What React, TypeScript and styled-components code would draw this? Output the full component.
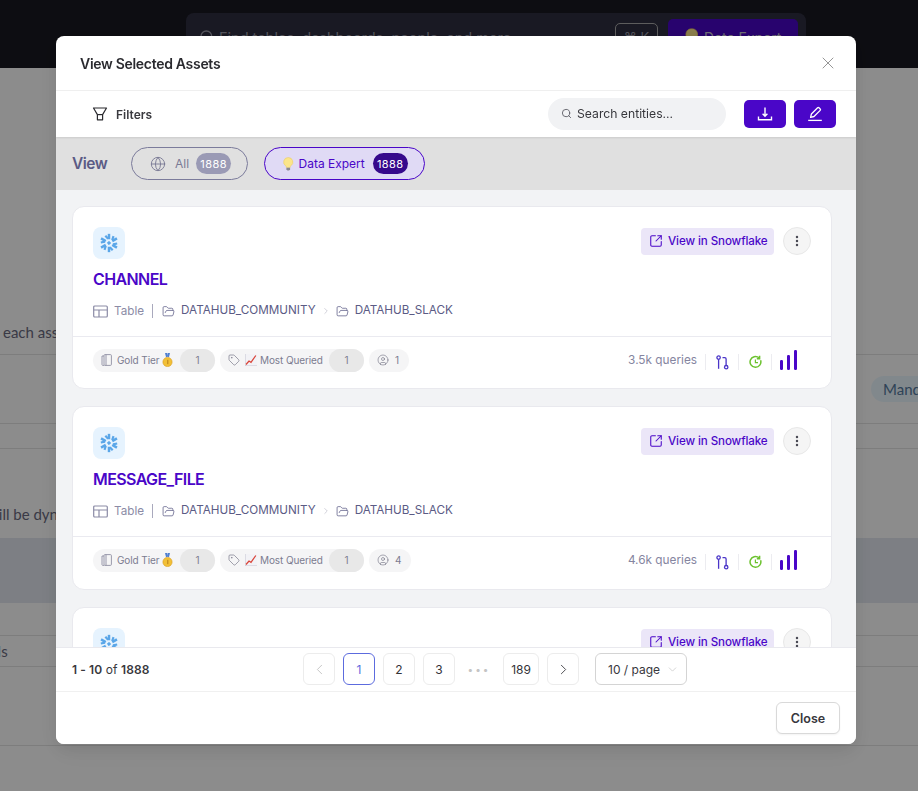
import styled, { createGlobalStyle } from 'styled-components';
import {
    ChevronDown,
    ChevronLeft,
    ChevronRight,
    CircleUser,
    EllipsisVertical,
    FolderOpen,
    Globe,
    Search,
    SquareArrowOutUpRight,
    Tag,
    X,
} from 'lucide-react';

const primary = '#4a06c8';
const slate = '#5b5b85';

const GlobalStyle = createGlobalStyle`
    * { box-sizing: border-box; }
    html, body { margin: 0; padding: 0; height: 100%; overflow: hidden; }
    body { font-family: Inter, "Noto Sans", sans-serif; background: #fff; }
`;

/* page behind the dialog */
const Page = styled.div`
    height: 791px;
    overflow: hidden;
    display: flex;
    flex-direction: column;
    font-family: Lato, "Open Sans", sans-serif;
    color: #6a6a80;
    font-size: 15px;
`;
const TopBar = styled.div`
    height: 68px;
    flex: none;
    background: #181821;
    padding: 13px 0 0 186px;
`;
const GlobalSearch = styled.div`
    width: 620px;
    height: 48px;
    border-radius: 8px;
    background: #2f2f41;
    display: flex;
    align-items: center;
    padding: 0 8px 0 13px;
    gap: 4px;
    color: #9a9aa8;
    font-family: Inter, sans-serif;
    font-size: 14.5px;
`;
const GlobalSearchText = styled.span`
    flex: 1;
`;
const KeyHint = styled.span`
    width: 43px;
    height: 28px;
    border: 1px solid #aaa;
    border-radius: 5px;
    display: flex;
    align-items: center;
    justify-content: center;
    font-size: 13px;
    margin-right: 6px;
`;
const ExpertButton = styled.span`
    width: 130px;
    height: 36px;
    border-radius: 5px;
    background: ${primary};
    color: #c9c9d2;
    display: flex;
    align-items: center;
    justify-content: center;
    gap: 6px;
    font-size: 14px;
`;
const BackRow = styled.div<{ $height: number; $line?: boolean; $band?: boolean }>`
    height: ${props => props.$height}px;
    flex: none;
    display: flex;
    align-items: flex-end;
    white-space: nowrap;
    background: ${props => (props.$band ? '#e3e8f0' : 'transparent')};
    border-bottom: ${props => (props.$line ? '1px solid #e4e4e4' : 'none')};
`;
const BackText = styled.span<{ $indent: number; $bottom: number }>`
    margin-left: ${props => props.$indent}px;
    margin-bottom: ${props => props.$bottom}px;
`;
const StatusPill = styled.span`
    margin: 0 0 21px 871px;
    height: 26px;
    padding: 0 12px;
    border-radius: 13px;
    background: #ecf8ff;
    color: #557aa0;
    display: flex;
    align-items: center;
`;

/* dialog */
const Overlay = styled.div`
    position: fixed;
    inset: 0;
    background: rgba(0, 0, 0, 0.45);
    padding: 36px 0 0 56px;
`;
const Dialog = styled.div`
    width: 800px;
    height: 708px;
    background: #fff;
    border-radius: 8px;
    overflow: hidden;
    display: flex;
    flex-direction: column;
    box-shadow: 0 6px 16px rgba(0, 0, 0, 0.08), 0 9px 28px rgba(0, 0, 0, 0.05);
`;
const DialogHeader = styled.div`
    height: 55px;
    flex: none;
    display: flex;
    align-items: center;
    justify-content: space-between;
    padding: 0 18px 0 24px;
    border-bottom: 1px solid #f0f0f0;
    h4 {
        margin: 0;
        font-size: 14px;
        font-weight: 600;
        color: #2a2a2f;
        letter-spacing: -0.3px;
    }
    svg {
        color: #8c8c8c;
    }
`;
const Toolbar = styled.div`
    height: 46px;
    flex: none;
    display: flex;
    align-items: center;
    padding: 0 20px 0 36px;
    box-shadow: 0 1px 2px rgba(0, 0, 0, 0.1);
    position: relative;
`;
const FiltersLabel = styled.div`
    display: flex;
    align-items: center;
    gap: 8px;
    font-size: 12px;
    font-weight: 600;
    color: #3a3a3f;
    flex: 1;
`;
const EntitySearch = styled.div`
    width: 178px;
    height: 32px;
    border-radius: 16px;
    background: #f1f2f4;
    display: flex;
    align-items: center;
    gap: 5px;
    padding: 0 0 2px 13px;
    font-size: 12.2px;
    color: #37373c;
    margin-right: 18px;
    svg {
        color: #5f5f68;
    }
`;
const IconButton = styled.button`
    width: 42px;
    height: 28px;
    border: none;
    border-radius: 5px;
    background: ${primary};
    color: #fff;
    display: flex;
    align-items: center;
    justify-content: center;
    padding: 0;
    & + & {
        margin-left: 8px;
    }
`;
const ViewBar = styled.div`
    height: 53px;
    flex: none;
    background: #e0e0e0;
    display: flex;
    align-items: center;
    padding: 0 0 0 16px;
`;
const ViewLabel = styled.span`
    font-size: 15.5px;
    font-weight: 600;
    color: ${slate};
    width: 59px;
    letter-spacing: -0.5px;
    margin-bottom: 1px;
`;
const ViewPill = styled.div<{ $active?: boolean }>`
    height: 33px;
    width: ${props => (props.$active ? 161 : 117)}px;
    margin-right: 16px;
    border-radius: 17px;
    border: 1px solid ${props => (props.$active ? primary : '#7b7b9b')};
    background: ${props => (props.$active ? '#e0daf5' : 'transparent')};
    color: ${props => (props.$active ? primary : '#7a7a95')};
    font-size: 12px;
    display: flex;
    align-items: center;
    padding-left: 18px;
    gap: ${props => (props.$active ? 5 : 9)}px;
`;
const ViewCount = styled.span<{ $active?: boolean }>`
    width: 35px;
    height: 21px;
    border-radius: 11px;
    margin-left: ${props => (props.$active ? 3 : -2)}px;
    background: ${props => (props.$active ? '#36098c' : '#9a9ab5')};
    color: #fff;
    font-size: 11px;
    letter-spacing: 0.4px;
    display: flex;
    align-items: center;
    justify-content: center;
`;
const ResultList = styled.div`
    flex: 1;
    min-height: 0;
    overflow: hidden;
    background: #f2f3f5;
    padding: 16px 24px 0 16px;
    display: flex;
    flex-direction: column;
    gap: 17px;
`;
const Card = styled.div`
    flex: none;
    height: 183.3px;
    background: #fff;
    border: 1px solid #e9e9ee;
    border-radius: 12px;
    display: flex;
    flex-direction: column;
`;
const CardBody = styled.div`
    height: 130px;
    flex: none;
    padding: 20px 20px 0 20px;
    border-bottom: 1px solid #eaeaf0;
`;
const CardTop = styled.div`
    display: flex;
    align-items: flex-start;
    height: 32px;
`;
const SourceIcon = styled.div`
    width: 32px;
    height: 32px;
    border-radius: 8px;
    background: #e6f3fe;
    display: flex;
    align-items: center;
    justify-content: center;
    margin-right: auto;
`;
const SnowflakeLink = styled.div`
    height: 27px;
    width: 133px;
    margin-top: 1px;
    border-radius: 4px;
    background: #ebe6f8;
    color: ${primary};
    font-size: 11.6px;
    font-weight: 500;
    display: flex;
    align-items: center;
    gap: 5px;
    padding: 0 0 1px 8px;
    white-space: nowrap;
    letter-spacing: -0.1px;
`;
const MoreButton = styled.div`
    width: 28px;
    height: 28px;
    margin-left: 9px;
    border-radius: 50%;
    background: #f5f5f5;
    border: 1px solid #e8e8e8;
    color: #4a4a55;
    display: flex;
    align-items: center;
    justify-content: center;
`;
const CardTitle = styled.h3`
    margin: 9px 0 0;
    font-size: 16px;
    line-height: 22px;
    font-weight: 600;
    color: ${primary};
    letter-spacing: -0.6px;
`;
const MetaRow = styled.div`
    display: flex;
    align-items: center;
    margin-top: 10px;
    height: 22px;
    color: ${slate};
    font-size: 11.7px;
    white-space: nowrap;
    svg {
        flex: none;
    }
`;
const MetaType = styled.span`
    color: #8b8ba6;
    margin-left: 6px;
`;
const MetaDivider = styled.span`
    width: 1px;
    height: 14px;
    background: #a9a9bd;
    margin: 0 9px 0 8px;
`;
const MetaPath = styled.span`
    margin-left: 6px;
    margin-bottom: 2px;
`;
const MetaChevron = styled.span`
    display: flex;
    margin: 0 5px;
    color: #b5b5c3;
`;
const CardFooter = styled.div`
    flex: 1;
    display: flex;
    align-items: center;
    padding: 0 34px 5px 20px;
`;
const Chip = styled.div<{ $width?: number }>`
    height: 23px;
    width: ${props => (props.$width ? `${props.$width}px` : 'auto')};
    border-radius: 12px;
    background: #f5f5f6;
    color: #7c7c90;
    font-size: 10px;
    display: flex;
    align-items: center;
    padding-left: 8px;
    margin-right: 5px;
    white-space: nowrap;
    letter-spacing: -0.1px;
`;
const ChipLabel = styled.span`
    display: flex;
    align-items: center;
    gap: 3px;
    margin-left: 5px;
`;
const ChipCount = styled.span`
    width: 35px;
    height: 23px;
    border-radius: 12px;
    background: #e8e8e8;
    margin-left: auto;
    display: flex;
    align-items: center;
    justify-content: center;
`;
const OwnerCount = styled.span`
    margin: 0 10px 0 6px;
`;
const FooterStats = styled.div`
    margin-left: auto;
    display: flex;
    align-items: center;
    color: #8585a0;
    font-size: 11.8px;
`;
const StatDivider = styled.span<{ $last?: boolean }>`
    width: 1px;
    height: 16px;
    background: #ececf0;
    margin: 4px ${props => (props.$last ? 8 : 10)}px 0 8px;
`;
const StatIcon = styled.span`
    display: flex;
    width: 13px;
    margin: 4px 1px 0 0;
`;
const PaginationBar = styled.div`
    height: 45px;
    flex: none;
    background: #fff;
    border-top: 1px solid #e9e9ee;
    border-bottom: 1px solid #f0f0f0;
    display: flex;
    align-items: center;
    padding: 0 0 1px 16px;
    position: relative;
`;
const RangeLabel = styled.div`
    width: 231px;
    font-size: 12px;
    letter-spacing: 0.1px;
    color: #38383d;
    b {
        font-weight: 600;
    }
`;
const Pager = styled.div`
    display: flex;
    gap: 8px;
    align-items: center;
`;
const PageItem = styled.div<{ $active?: boolean; $wide?: boolean; $disabled?: boolean }>`
    width: ${props => (props.$wide ? 36 : 32)}px;
    height: 32px;
    border-radius: 6px;
    border: 1px solid ${props => (props.$active ? '#5c6bde' : '#ececec')};
    color: ${props => (props.$active ? '#5c6bde' : props.$disabled ? '#bdbdbd' : '#333338')};
    font-size: 12px;
    display: flex;
    align-items: center;
    justify-content: center;
`;
const PageDots = styled.div`
    width: 32px;
    text-align: center;
    color: #c4c4c4;
    font-size: 10px;
    letter-spacing: 2px;
`;
const PageSize = styled.div`
    width: 92px;
    height: 32px;
    margin-left: 16px;
    border: 1px solid #d4d4d4;
    border-radius: 6px;
    color: #38383d;
    font-size: 12px;
    display: flex;
    align-items: center;
    gap: 6px;
    padding-left: 12px;
    svg {
        color: #bfbfbf;
    }
`;
const DialogFooter = styled.div`
    flex: none;
    height: 52px;
    display: flex;
    justify-content: flex-end;
    align-items: flex-start;
    padding: 10px 16px 0 0;
    background: #fff;
    position: relative;
`;
const CloseButton = styled.button`
    width: 64px;
    height: 32px;
    border-radius: 6px;
    border: 1px solid #d9d9d9;
    background: #fff;
    font-family: inherit;
    font-size: 12.5px;
    font-weight: 600;
    color: #38383d;
    box-shadow: 0 1px 2px rgba(0, 0, 0, 0.05);
`;

/* drawings that the icon packages don't have */
const FunnelIcon = () => (
    <svg width="16" height="16" viewBox="0 0 16 16" fill="none" stroke="#2a2a2f" strokeWidth="1.2">
        <path d="M1.5 2h13L10.6 8.6v5.2H5.4V8.6z" strokeLinejoin="round" />
        <path d="M5.4 8.6h5.2" />
    </svg>
);
const DownloadIcon = () => (
    <svg width="16" height="16" viewBox="0 0 16 16" fill="none" stroke="currentColor" strokeWidth="1.4">
        <path d="M8 1.5v8.5M5.6 7.8 8 10.2l2.4-2.4M1.5 10.5v3.3h13v-3.3" />
    </svg>
);
const EditIcon = () => (
    <svg width="16" height="16" viewBox="0 0 16 16" fill="none" stroke="currentColor" strokeWidth="1.3">
        <path d="M3.6 11.3 4.4 8 10.6 1.8a1 1 0 0 1 1.4 0l1.2 1.2a1 1 0 0 1 0 1.4L7 10.5z" strokeLinejoin="round" />
        <path d="M1.2 14.4h13.6" />
    </svg>
);
const BulbIcon = ({ size = 14 }: { size?: number }) => (
    <svg width={size * 0.75} height={size} viewBox="0 0 12 16">
        <path d="M6 .6a5.2 5.2 0 0 0-3 9.5c.6.5.8 1.2.8 1.9h4.4c0-.7.2-1.4.8-1.9A5.2 5.2 0 0 0 6 .6z" fill="#fbe58a" stroke="#e9c94f" strokeWidth=".5" />
        <path d="M3.9 12.2h4.2v1.9L7 15.4H5l-1.1-1.3z" fill="#8a8a92" />
    </svg>
);
const SnowflakeMark = () => (
    <svg width="20" height="20" viewBox="0 0 24 24" fill="none" stroke="#5aa6e8" strokeWidth="3">
        {[0, 60, 120, 180, 240, 300].map(angle => (
            <g key={angle} transform={`rotate(${angle} 12 12)`}>
                <path d="M12 1v6.5" />
                <path d="M7.6 3.2 11 7" strokeWidth="2.6" />
            </g>
        ))}
        <path d="M12 10 14 12 12 14 10 12z" fill="#5aa6e8" strokeWidth="1" />
    </svg>
);
const TableIcon = () => (
    <svg width="15" height="13" viewBox="0 0 15 13" fill="none" stroke="#8b8ba6" strokeWidth="1.2">
        <rect x=".7" y="1" width="13.6" height="11" rx="1" />
        <path d="M.7 5h13.6M6 5v7" />
    </svg>
);
const DocIcon = () => (
    <svg width="11" height="12" viewBox="0 0 11 12" fill="none" stroke="#8f8fa3" strokeWidth=".9">
        <rect x="3" y=".6" width="7.4" height="10.8" rx="1" />
        <path d="M3 2H1v8.6c0 .5.4.8.8.8H3M5 .6v10.8" />
    </svg>
);
const MedalIcon = () => (
    <svg width="11" height="14" viewBox="0 0 11 14">
        <path d="M3 0h2.2l.6 4H4zM8 0H5.8l-.3 4H7z" fill="#4f7fd0" />
        <circle cx="5.5" cy="9" r="4.6" fill="#f2c037" stroke="#d89c1c" strokeWidth=".6" />
        <path d="M5.8 6.8v4.4" stroke="#b8801a" strokeWidth="1" />
    </svg>
);
const TrendIcon = () => (
    <svg width="12" height="12" viewBox="0 0 12 12" fill="none">
        <rect width="12" height="12" fill="#f2f2f6" />
        <path d="M0 12h12M0 0v12" stroke="#b9b9c9" strokeWidth=".8" />
        <path d="M1 10.5 4 7l2 1.4L10.8 1.5" stroke="#d9453a" strokeWidth="1.3" />
    </svg>
);
const LineageIcon = () => (
    <svg width="13" height="15" viewBox="0 0 13 15" fill="none" stroke="#4a35c8" strokeWidth="1.3">
        <circle cx="2.6" cy="2.6" r="1.7" />
        <path d="M2.6 4.4v9.4" />
        <path d="M6.5 2.6h2.2c.9 0 1.4.6 1.4 1.4v6.4" />
        <circle cx="10.2" cy="12.2" r="1.7" />
    </svg>
);
const FreshnessIcon = () => (
    <svg width="13" height="14" viewBox="0 0 13 14" fill="none" stroke="#6cc22f" strokeWidth="1.5">
        <path d="M11.6 5.2a5.4 5.4 0 1 1-1.6-2.4" />
        <path d="M10.6.8v3h-2.8" />
        <path d="M6.4 4.4v3.2h2.6" strokeWidth="1.2" />
    </svg>
);
const PopularityIcon = () => (
    <svg width="17" height="20" viewBox="0 0 17 20" fill={primary}>
        <rect y="10" width="3" height="10" rx="1.2" />
        <rect x="7" y="5" width="3" height="15" rx="1.2" />
        <rect x="14" width="3" height="20" rx="1.2" />
    </svg>
);

const assets = [
    { name: 'CHANNEL', owners: 1, queries: '3.5k' },
    { name: 'MESSAGE_FILE', owners: 4, queries: '4.6k' },
    { name: 'USER', owners: 2, queries: '2.1k' },
];

const AssetCard = ({ name, owners, queries }: { name: string; owners: number; queries: string }) => (
    <Card>
        <CardBody>
            <CardTop>
                <SourceIcon>
                    <SnowflakeMark />
                </SourceIcon>
                <SnowflakeLink>
                    <SquareArrowOutUpRight size={14} strokeWidth={1.8} />
                    View in Snowflake
                </SnowflakeLink>
                <MoreButton>
                    <EllipsisVertical size={14} strokeWidth={2.2} />
                </MoreButton>
            </CardTop>
            <CardTitle>{name}</CardTitle>
            <MetaRow>
                <TableIcon />
                <MetaType>Table</MetaType>
                <MetaDivider />
                <FolderOpen size={13} strokeWidth={1.4} />
                <MetaPath>DATAHUB_COMMUNITY</MetaPath>
                <MetaChevron>
                    <ChevronRight size={10} strokeWidth={1.5} />
                </MetaChevron>
                <FolderOpen size={13} strokeWidth={1.4} />
                <MetaPath>DATAHUB_SLACK</MetaPath>
            </MetaRow>
        </CardBody>
        <CardFooter>
            <Chip $width={122}>
                <DocIcon />
                <ChipLabel>
                    Gold Tier <MedalIcon />
                </ChipLabel>
                <ChipCount>1</ChipCount>
            </Chip>
            <Chip $width={144}>
                <Tag size={12} strokeWidth={1.3} color="#6d6d80" />
                <ChipLabel>
                    <TrendIcon /> Most Queried
                </ChipLabel>
                <ChipCount>1</ChipCount>
            </Chip>
            <Chip>
                <CircleUser size={12} strokeWidth={1.2} color="#6d6d80" />
                <OwnerCount>{owners}</OwnerCount>
            </Chip>
            <FooterStats>
                {queries} queries
                <StatDivider />
                <StatIcon>
                    <LineageIcon />
                </StatIcon>
                <StatDivider />
                <StatIcon>
                    <FreshnessIcon />
                </StatIcon>
                <StatDivider $last />
                <PopularityIcon />
            </FooterStats>
        </CardFooter>
    </Card>
);

const App = () => {
    return (
        <>
            <GlobalStyle />
            <Page>
                <TopBar>
                    <GlobalSearch>
                        <Search size={16} />
                        <GlobalSearchText>Find tables, dashboards, people, and more...</GlobalSearchText>
                        <KeyHint>⌘ K</KeyHint>
                        <ExpertButton>
                            <BulbIcon size={18} /> Data Expert
                        </ExpertButton>
                    </GlobalSearch>
                </TopBar>
                <BackRow $height={287} $line>
                    <BackText $indent={3} $bottom={13}>each asset in the selection will be reviewed</BackText>
                </BackRow>
                <BackRow $height={69} $line>
                    <StatusPill>Mandatory</StatusPill>
                </BackRow>
                <BackRow $height={25} $line />
                <BackRow $height={89}>
                    <BackText $indent={-13} $bottom={15}>will be dynamically updated</BackText>
                </BackRow>
                <BackRow $height={65} $band />
                <BackRow $height={33} $line />
                <BackRow $height={31} $line>
                    <BackText $indent={-38} $bottom={6}>Details</BackText>
                </BackRow>
                <BackRow $height={79} $line />
            </Page>
            <Overlay>
                <Dialog>
                    <DialogHeader>
                        <h4>View Selected Assets</h4>
                        <X size={20} strokeWidth={1.1} />
                    </DialogHeader>
                    <Toolbar>
                        <FiltersLabel>
                            <FunnelIcon />
                            Filters
                        </FiltersLabel>
                        <EntitySearch>
                            <Search size={11} />
                            Search entities...
                        </EntitySearch>
                        <IconButton>
                            <DownloadIcon />
                        </IconButton>
                        <IconButton>
                            <EditIcon />
                        </IconButton>
                    </Toolbar>
                    <ViewBar>
                        <ViewLabel>View</ViewLabel>
                        <ViewPill>
                            <Globe size={16} strokeWidth={1.4} />
                            All
                            <ViewCount>1888</ViewCount>
                        </ViewPill>
                        <ViewPill $active>
                            <BulbIcon />
                            Data Expert
                            <ViewCount $active>1888</ViewCount>
                        </ViewPill>
                    </ViewBar>
                    <ResultList>
                        {assets.map(asset => (
                            <AssetCard key={asset.name} {...asset} />
                        ))}
                    </ResultList>
                    <PaginationBar>
                        <RangeLabel>
                            <b>1 - 10</b> of <b>1888</b>
                        </RangeLabel>
                        <Pager>
                            <PageItem $disabled>
                                <ChevronLeft size={17} strokeWidth={1.2} />
                            </PageItem>
                            <PageItem $active>1</PageItem>
                            <PageItem>2</PageItem>
                            <PageItem>3</PageItem>
                            <PageDots>•••</PageDots>
                            <PageItem $wide>189</PageItem>
                            <PageItem>
                                <ChevronRight size={17} strokeWidth={1.2} />
                            </PageItem>
                        </Pager>
                        <PageSize>
                            10 / page
                            <ChevronDown size={13} strokeWidth={1.2} />
                        </PageSize>
                    </PaginationBar>
                    <DialogFooter>
                        <CloseButton>Close</CloseButton>
                    </DialogFooter>
                </Dialog>
            </Overlay>
        </>
    );
};

export default App;
